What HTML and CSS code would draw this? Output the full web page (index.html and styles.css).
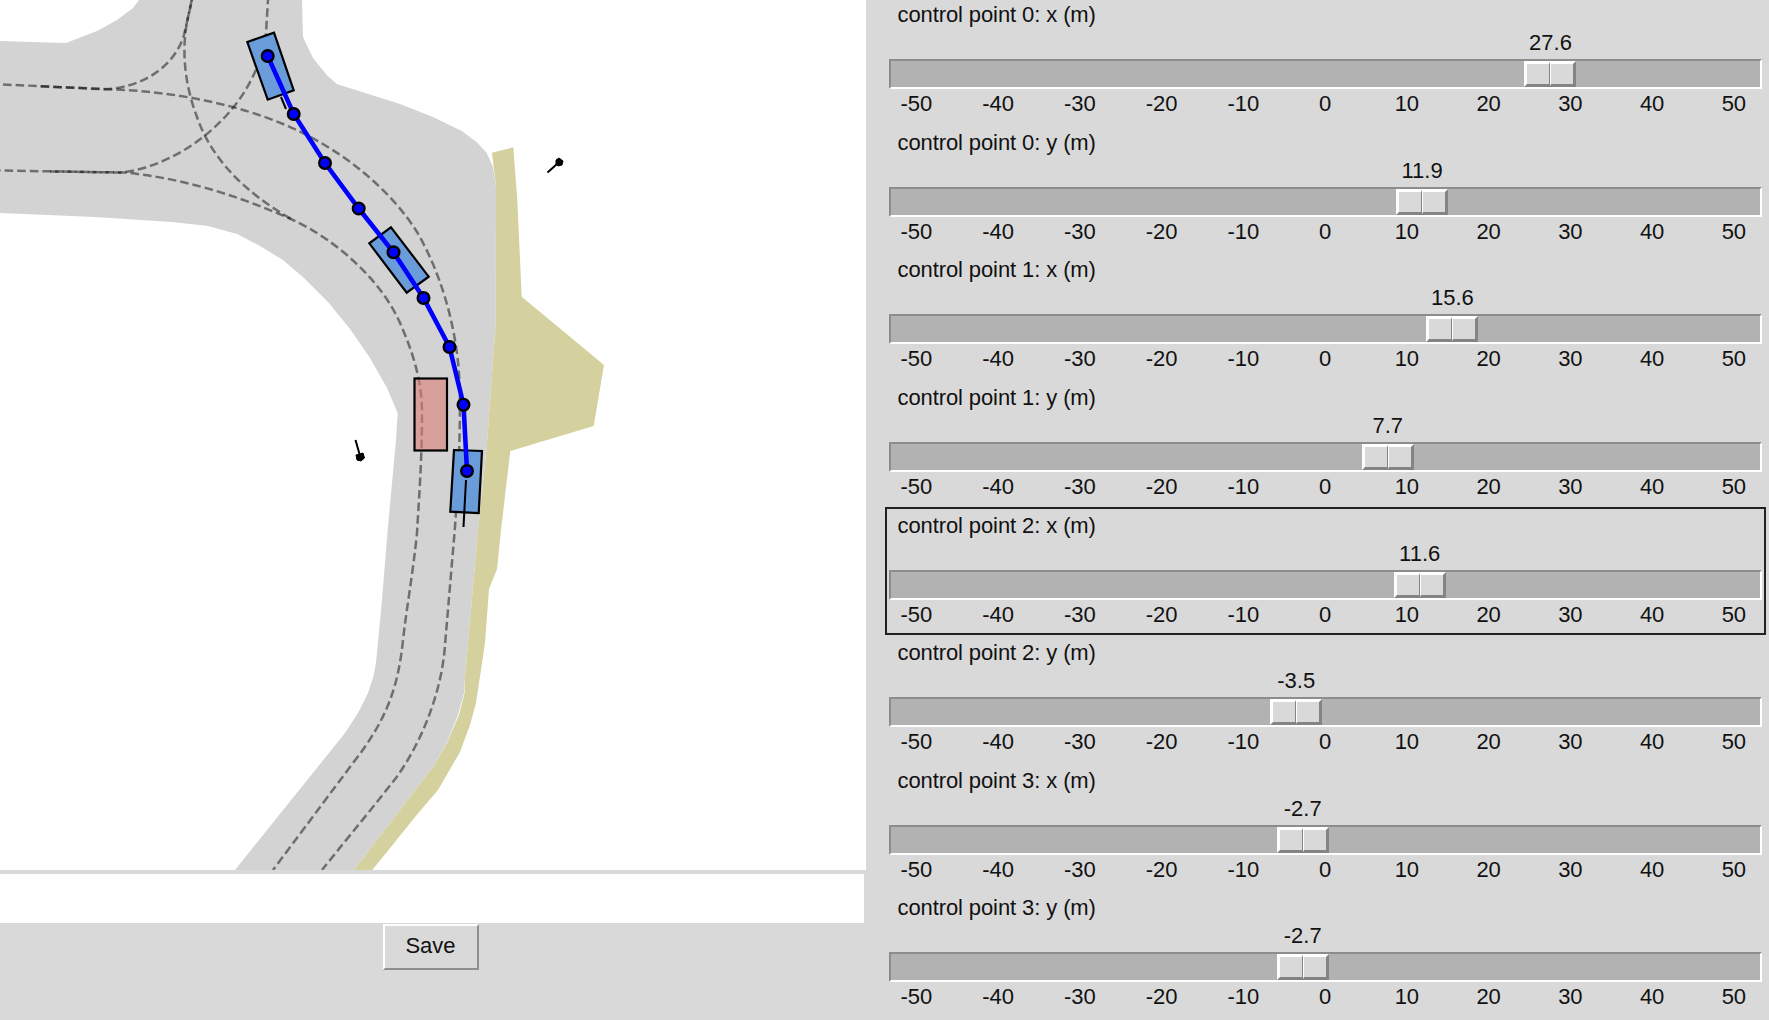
FILE: index.html
```html
<!DOCTYPE html>
<html lang="en">
<head>
<meta charset="utf-8">
<title>Control point editor</title>
<link rel="stylesheet" href="styles.css">
</head>
<body>
<main class="app">
<section class="left">
<svg class="map" viewBox="0 0 866 870" width="866" height="870">
<path class="road" d="M139 0L133 8 117 20 97 31 66 43 0 41V213L95 217 172 222 208 226 237 234 260 246 283 260 304 278 328 302 350 329 370 358 387 388 397.7 413 396 440 387.7 530 381.7 603 376 663 373.3 677 368 693 358 713 345 733 235 870H354L416.7 788 433 767 446.7 743 458 715 464 693 465 677 478 530 486.7 447 495.7 323 496 187 493 167 486.7 153 476.7 142 461.7 131 433 117 400 104 336.7 84 326.7 75 313 58 303 37 302 0Z"/>
<path class="verge" d="M492 152.7L513.3 147.3 517.3 200 521.7 296.7 604 365 593.7 426 510.3 451 501 530 497 569 489 589 485 643 476 703 470 725 460 752 438 790 416.7 815 372.3 870H354L416.7 788 433 767 447 743 459 715 464.5 693 465 677 478 530 486.7 447 495.7 323 496 187Z"/>
<g class="lanes">
<path d="M40.500 86.300L105 89.3C145 87 175 65 184 35L192 0"/>
<path d="M3 84.5L115 89.5C180 92 240 106 283 124C345 150 392 192 417 232C446 282 458 340 459.500 383C461 430 458 480 455 527L445 645C442 690 423 740 396.700 777C375 805 350 835 322 870"/>
<path d="M50 171.400L120 172.500C175 168 255 115 266 33L268 0"/>
<path d="M-8 170.400L125 172.500C180 178 235 194 293 220C338 241 385 283 403 330C415 358 422 385 422 413C422 460 419 497 417 533C413 573 407 605 403 640C398 690 385 722 353 763L273 870"/>
<path d="M191.700 0L187 22C181 55 186 88 197 117C210 155 240 190 293 220"/>
</g>
<rect class="obstacle" x="414.5" y="378.5" width="32.5" height="72"/>
<g class="car">
<path d="M247.3 42L274 32.7 293.7 90.3 267.7 99.7Z"/>
<path d="M391 227.3L428.7 276.7 406.7 292.7 369.3 243.3Z"/>
<path d="M454 450L482 451 478.7 513 450.3 511.7Z"/>
</g>
<path class="heading" d="M466 480L463.5 527M281 97L286 109"/>
<polyline class="route" points="267.7,56 293.7,114 325,163 358.7,208.5 393.5,252.3 423.5,298 449.5,347 463.5,404.7 467,471"/>
<g class="knots">
<circle cx="267.7" cy="56" r="5.8"/><circle cx="293.7" cy="114" r="5.8"/><circle cx="325" cy="163" r="5.8"/><circle cx="358.7" cy="208.5" r="5.8"/><circle cx="393.5" cy="252.3" r="5.8"/><circle cx="423.5" cy="298" r="5.8"/><circle cx="449.5" cy="347" r="5.8"/><circle cx="463.5" cy="404.7" r="5.8"/><circle cx="467" cy="471" r="5.8"/>
</g>
<path class="heading" d="M547.500 172.500L557 164M355.500 440L359.500 454"/>
<path class="pin" d="M556 160L559 158 563 161 562 165 558 166 556 164ZM356 455L363 453 364.500 458 361 461 357 460Z"/>
</svg>
<div class="status"></div>
<div class="actions"><button class="save">Save</button></div>
</section>
<section class="controls">
<div class="scale" style="--v:27.6"><div class="label">control point 0: x (m)</div><div class="value">27.6</div><div class="trough"><div class="thumb"><i></i><i></i></div></div><div class="ticks"><span>-50</span><span>-40</span><span>-30</span><span>-20</span><span>-10</span><span>0</span><span>10</span><span>20</span><span>30</span><span>40</span><span>50</span></div></div>
<div class="scale" style="--v:11.9"><div class="label">control point 0: y (m)</div><div class="value">11.9</div><div class="trough"><div class="thumb"><i></i><i></i></div></div><div class="ticks"><span>-50</span><span>-40</span><span>-30</span><span>-20</span><span>-10</span><span>0</span><span>10</span><span>20</span><span>30</span><span>40</span><span>50</span></div></div>
<div class="scale" style="--v:15.6"><div class="label">control point 1: x (m)</div><div class="value">15.6</div><div class="trough"><div class="thumb"><i></i><i></i></div></div><div class="ticks"><span>-50</span><span>-40</span><span>-30</span><span>-20</span><span>-10</span><span>0</span><span>10</span><span>20</span><span>30</span><span>40</span><span>50</span></div></div>
<div class="scale" style="--v:7.7"><div class="label">control point 1: y (m)</div><div class="value">7.7</div><div class="trough"><div class="thumb"><i></i><i></i></div></div><div class="ticks"><span>-50</span><span>-40</span><span>-30</span><span>-20</span><span>-10</span><span>0</span><span>10</span><span>20</span><span>30</span><span>40</span><span>50</span></div></div>
<div class="scale focused" style="--v:11.6"><div class="label">control point 2: x (m)</div><div class="value">11.6</div><div class="trough"><div class="thumb"><i></i><i></i></div></div><div class="ticks"><span>-50</span><span>-40</span><span>-30</span><span>-20</span><span>-10</span><span>0</span><span>10</span><span>20</span><span>30</span><span>40</span><span>50</span></div></div>
<div class="scale" style="--v:-3.5"><div class="label">control point 2: y (m)</div><div class="value">-3.5</div><div class="trough"><div class="thumb"><i></i><i></i></div></div><div class="ticks"><span>-50</span><span>-40</span><span>-30</span><span>-20</span><span>-10</span><span>0</span><span>10</span><span>20</span><span>30</span><span>40</span><span>50</span></div></div>
<div class="scale" style="--v:-2.7"><div class="label">control point 3: x (m)</div><div class="value">-2.7</div><div class="trough"><div class="thumb"><i></i><i></i></div></div><div class="ticks"><span>-50</span><span>-40</span><span>-30</span><span>-20</span><span>-10</span><span>0</span><span>10</span><span>20</span><span>30</span><span>40</span><span>50</span></div></div>
<div class="scale" style="--v:-2.7"><div class="label">control point 3: y (m)</div><div class="value">-2.7</div><div class="trough"><div class="thumb"><i></i><i></i></div></div><div class="ticks"><span>-50</span><span>-40</span><span>-30</span><span>-20</span><span>-10</span><span>0</span><span>10</span><span>20</span><span>30</span><span>40</span><span>50</span></div></div>
</section>
</main>
</body>
</html>
```
FILE: styles.css
```css
* { box-sizing: border-box; }
body { margin: 0; background: #d9d9d9; color: #111; font: 22px/26px "Liberation Sans", Arial, sans-serif; overflow: hidden; }
.app { display: flex; height: 1020px; overflow: hidden; }
.left { flex: 0 0 885px; }
.map { display: block; background: #fff; }
.road { fill: #d3d3d3; }
.verge { fill: #d4d19e; }
.lanes path { fill: none; stroke: #000; stroke-opacity: .48; stroke-width: 2.5; stroke-dasharray: 8.6 4; }
.obstacle { fill: #dc7f76; fill-opacity: .6; stroke: #000; stroke-width: 2.2; }
.car path { fill: #6a9cda; stroke: #000; stroke-width: 2.2; }
.heading { fill: none; stroke: #000; stroke-width: 2; }
.route { fill: none; stroke: #00f; stroke-width: 4.6; }
.knots circle { fill: #00f; stroke: #000; stroke-width: 2.4; }
.pin { fill: #000; stroke: #000; stroke-width: 1; }
.status { width: 864px; height: 49px; margin-top: 4px; background: #fff; }
.actions { display: flex; justify-content: center; width: 861px; padding-top: 1px; }
.save { width: 96px; height: 46px; padding: 0 0 3px; border: 2px solid; border-color: #fff #8e8e8e #8e8e8e #fff; border-radius: 0; background: #d9d9d9; color: #111; font: inherit; }
.controls { flex: 0 0 881px; min-width: 0; margin-top: -3.7px; }
.scale { display: flex; flex-direction: column; height: 127.65px; padding: 3.7px 4px 0 3.5px; }
.focused { border: 2px solid #222; padding: 1.7px 2px 0 1.5px; }
.label { height: 27px; padding: 2px 0 0 9px; letter-spacing: -.1px; white-space: nowrap; }
.value { width: 52px; height: 32px; margin-left: calc(410.3px + var(--v) * 8.177px); padding-top: 3px; text-align: center; white-space: nowrap; }
.trough { height: 30px; border: 2px solid; border-color: #8c8c8c #fff #fff #8c8c8c; background: #b2b2b2; }
.thumb { display: flex; width: 52px; height: 26px; margin-left: calc(408.3px + var(--v) * 8.177px); border: 1px solid; border-color: #fff #848484 #848484 #fff; }
.thumb i { flex: 1; border: 2px solid; border-color: #fff #848484 #848484 #fff; background: #d9d9d9; }
.thumb i:first-child { border-right-width: 1px; }
.thumb i:last-child { border-left-width: 1px; }
.ticks { display: grid; grid-template-columns: repeat(11, 81.75px); margin-left: -13px; padding-top: 2px; text-align: center; }
```
